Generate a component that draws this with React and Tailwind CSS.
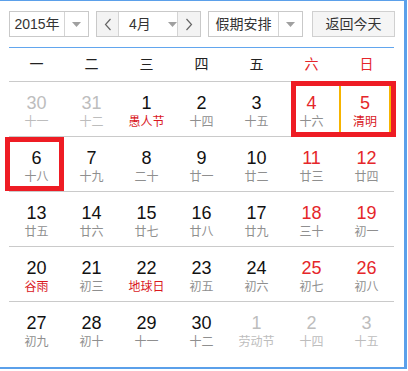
import React from "react";

const FONT = { fontFamily: '"Liberation Sans", Arial, "Noto Sans CJK SC", sans-serif' };

const Caret = () => (
  <svg width="9" height="5" viewBox="0 0 9 5" className="block">
    <polygon points="0,0 9,0 4.5,5" fill="#a0a0a0" />
  </svg>
);

const Chevron = ({ dir }) => (
  <svg width="8" height="13" viewBox="0 0 8 13" className="block">
    <polyline
      points={dir === "left" ? "6.5,1 1.5,6.5 6.5,12" : "1.5,1 6.5,6.5 1.5,12"}
      fill="none"
      stroke="#666"
      strokeWidth="1.2"
    />
  </svg>
);

const weeks = ["一", "二", "三", "四", "五", "六", "日"];

// kind: n normal, w weekend, o other month
const rows = [
  [
    ["30", "十一", "o"], ["31", "十二", "o"], ["1", "愚人节", "n", true], ["2", "十四", "n"],
    ["3", "十五", "n"], ["4", "十六", "w"], ["5", "清明", "w", true, true],
  ],
  [
    ["6", "十八", "n"], ["7", "十九", "n"], ["8", "二十", "n"], ["9", "廿一", "n"],
    ["10", "廿二", "n"], ["11", "廿三", "w"], ["12", "廿四", "w"],
  ],
  [
    ["13", "廿五", "n"], ["14", "廿六", "n"], ["15", "廿七", "n"], ["16", "廿八", "n"],
    ["17", "廿九", "n"], ["18", "三十", "w"], ["19", "初一", "w"],
  ],
  [
    ["20", "谷雨", "n", true], ["21", "初三", "n"], ["22", "地球日", "n", true], ["23", "初五", "n"],
    ["24", "初六", "n"], ["25", "初七", "w"], ["26", "初八", "w"],
  ],
  [
    ["27", "初九", "n"], ["28", "初十", "n"], ["29", "十一", "n"], ["30", "十二", "n"],
    ["1", "劳动节", "o"], ["2", "十四", "o"], ["3", "十五", "o"],
  ],
];

function Cell({ d }) {
  const [num, lunar, kind, fest, today] = d;
  const numColor = kind === "o" ? "text-[#bdbdbd]" : kind === "w" ? "text-[#e5262a]" : "text-[#111]";
  const lunarColor = kind === "o" ? "text-[#bdbdbd]" : fest ? "text-[#d9181e]" : "text-[#8f8f8f]";
  const inner = (
    <div className="flex flex-col items-center pt-[11px]">
      <div className={`text-[18px] leading-[20px] ${numColor}`}>{num}</div>
      <div className={`text-[12px] leading-[16px] mt-[1px] ${lunarColor}`}>{lunar}</div>
    </div>
  );
  if (today) {
    return (
      <div className="w-[55px] h-[54px]">
        <div className="w-[52px] h-full border-2 border-[#f6b400] flex flex-col items-center pt-[9px]">
          <div className={`text-[18px] leading-[20px] ${numColor}`}>{num}</div>
          <div className={`text-[12px] leading-[16px] mt-[1px] ${lunarColor}`}>{lunar}</div>
        </div>
      </div>
    );
  }
  return <div className="w-[55px] h-[54px]">{inner}</div>;
}

export default function App() {
  return (
    <div
      className="relative w-[407px] h-[369px] bg-white border-t border-r-[3px] border-b-2 border-[#5ba0ea]"
      style={FONT}
    >
      <div className="pl-[9px] pt-[10px]">
        {/* header controls */}
        <div className="flex items-center h-[26px] text-[14px] text-[#333]">
          <div className="flex h-[26px] w-[80px] border border-[#c9c9c9] bg-white">
            <div className="w-[54px] flex items-center justify-center">2015年</div>
            <div className="flex-1 border-l border-[#d4d4d4] flex items-center justify-center">
              <Caret />
            </div>
          </div>
          <div className="ml-[7px] flex h-[26px] w-[105px] border border-[#c9c9c9] bg-white">
            <div className="w-[21px] bg-[#f3f3f3] flex items-center justify-center">
              <Chevron dir="left" />
            </div>
            <div className="w-[60px] border-l border-r border-[#d4d4d4] flex items-center pl-[10px]">
              <span>4月</span>
              <span className="ml-[17px]"><Caret /></span>
            </div>
            <div className="flex-1 bg-[#f3f3f3] flex items-center justify-center">
              <Chevron dir="right" />
            </div>
          </div>
          <div className="ml-[7px] flex h-[26px] w-[95px] border border-[#c9c9c9] bg-white">
            <div className="w-[69px] flex items-center justify-center">假期安排</div>
            <div className="flex-1 border-l border-[#d4d4d4] flex items-center justify-center">
              <Caret />
            </div>
          </div>
          <div className="ml-[9px] h-[26px] w-[83px] border border-[#d0d0d0] bg-[#f5f5f5] flex items-center justify-center">
            返回今天
          </div>
        </div>

        <div className="mt-[10px] w-[385px] h-px bg-[#62a6ee]" />

        {/* week header */}
        <div className="w-[385px] h-[34px] flex border-b border-[#cacaca]">
          {weeks.map((w, i) => (
            <div
              key={w}
              className={`w-[55px] flex items-center justify-center text-[14px] ${i >= 5 ? "text-[#e5262a]" : "text-[#222]"}`}
            >
              {w}
            </div>
          ))}
        </div>

        {rows.map((r, ri) => (
          <div
            key={ri}
            className={`w-[385px] flex ${ri < rows.length - 1 ? "border-b border-[#cacaca]" : ""}`}
          >
            {r.map((d, ci) => (
              <Cell key={ci} d={d} />
            ))}
          </div>
        ))}
      </div>

      {/* annotation boxes */}
      <div className="absolute left-[291px] top-[80px] w-[105px] h-[56px] border-[5px] border-[#ee1c24]" />
      <div className="absolute left-[5px] top-[136px] w-[59px] h-[54px] border-[5px] border-[#ee1c24]" />
    </div>
  );
}
